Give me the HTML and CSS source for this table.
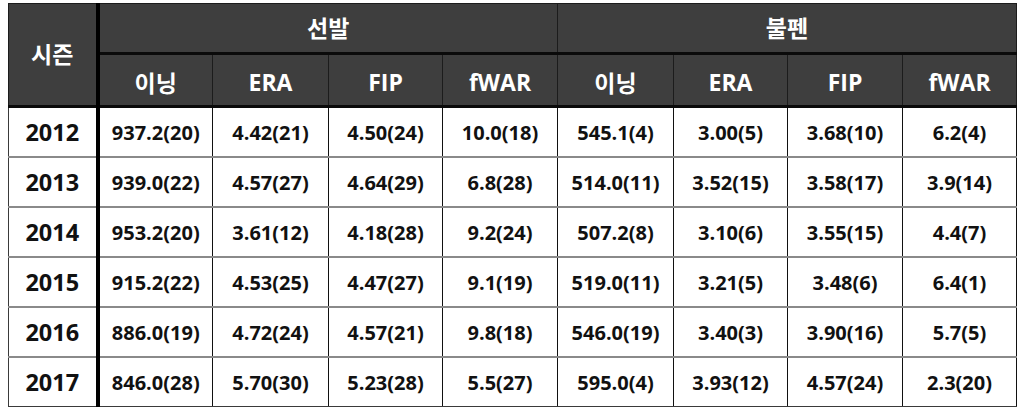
FILE: index.html
```html
<!DOCTYPE html>
<html lang="ko">
<head>
<meta charset="utf-8">
<link rel="stylesheet" href="styles.css">
</head>
<body>
<table class="stats">
  <colgroup>
    <col class="c-year">
    <col class="c-a"><col class="c-b"><col class="c-c"><col class="c-a">
    <col class="c-b"><col class="c-c"><col class="c-a"><col class="c-c">
  </colgroup>
  <thead>
    <tr class="h1">
      <th rowspan="2" class="year-h">시즌</th>
      <th colspan="4" class="grp">선발</th>
      <th colspan="4" class="grp">불펜</th>
    </tr>
    <tr class="h2">
      <th>이닝</th><th>ERA</th><th>FIP</th><th>fWAR</th>
      <th>이닝</th><th>ERA</th><th>FIP</th><th>fWAR</th>
    </tr>
  </thead>
  <tbody>
    <tr><th>2012</th><td>937.2(20)</td><td>4.42(21)</td><td>4.50(24)</td><td>10.0(18)</td><td>545.1(4)</td><td>3.00(5)</td><td>3.68(10)</td><td>6.2(4)</td></tr>
    <tr><th>2013</th><td>939.0(22)</td><td>4.57(27)</td><td>4.64(29)</td><td>6.8(28)</td><td>514.0(11)</td><td>3.52(15)</td><td>3.58(17)</td><td>3.9(14)</td></tr>
    <tr><th>2014</th><td>953.2(20)</td><td>3.61(12)</td><td>4.18(28)</td><td>9.2(24)</td><td>507.2(8)</td><td>3.10(6)</td><td>3.55(15)</td><td>4.4(7)</td></tr>
    <tr><th>2015</th><td>915.2(22)</td><td>4.53(25)</td><td>4.47(27)</td><td>9.1(19)</td><td>519.0(11)</td><td>3.21(5)</td><td>3.48(6)</td><td>6.4(1)</td></tr>
    <tr><th>2016</th><td>886.0(19)</td><td>4.72(24)</td><td>4.57(21)</td><td>9.8(18)</td><td>546.0(19)</td><td>3.40(3)</td><td>3.90(16)</td><td>5.7(5)</td></tr>
    <tr><th>2017</th><td>846.0(28)</td><td>5.70(30)</td><td>5.23(28)</td><td>5.5(27)</td><td>595.0(4)</td><td>3.93(12)</td><td>4.57(24)</td><td>2.3(20)</td></tr>
  </tbody>
</table>
</body>
</html>
```

FILE: styles.css
```css
html, body {
  margin: 0;
  background: #ffffff;
}
body {
  padding: 3px 0 0 8px;
  font-family: "Open Sans", "Noto Sans CJK KR", sans-serif;
}
.stats {
  border-collapse: collapse;
  table-layout: fixed;
  width: 1008px;
  border: 1px solid #3a3a3a;
}
.c-year { width: 89px; }
.c-a { width: 115px; }
.c-b { width: 116px; }
.c-c { width: 114px; }

.stats th, .stats td {
  padding: 0;
  text-align: center;
  vertical-align: middle;
  font-weight: 700;
}
thead th {
  background: #3e3e3e;
  color: #ffffff;
  font-size: 23px;
  border: 1px solid #1c1c1c;
}
.h1 th { height: 46px; }
.h1 .grp {
  border-bottom: 3px solid #0a0a0a;
  padding-bottom: 2px;
}
.h2 th {
  height: 47px;
  padding-top: 3px;
  border-bottom: 3px solid #0a0a0a;
}
.year-h {
  border-right: 4px solid #000 !important;
  border-bottom: 3px solid #0a0a0a !important;
  padding-bottom: 4px !important;
}
tbody th {
  font-size: 23.5px;
  color: #111;
  border-right: 4px solid #000;
  border-bottom: 2px solid #8a8a8a;
  height: 48px;
}
tbody td {
  font-size: 20px;
  color: #111;
  border-left: 1px solid #111;
  border-right: 1px solid #111;
  border-bottom: 2px solid #8a8a8a;
  height: 48px;
}
tbody tr:last-child th, tbody tr:last-child td {
  border-bottom: 1px solid #3a3a3a;
}
```
